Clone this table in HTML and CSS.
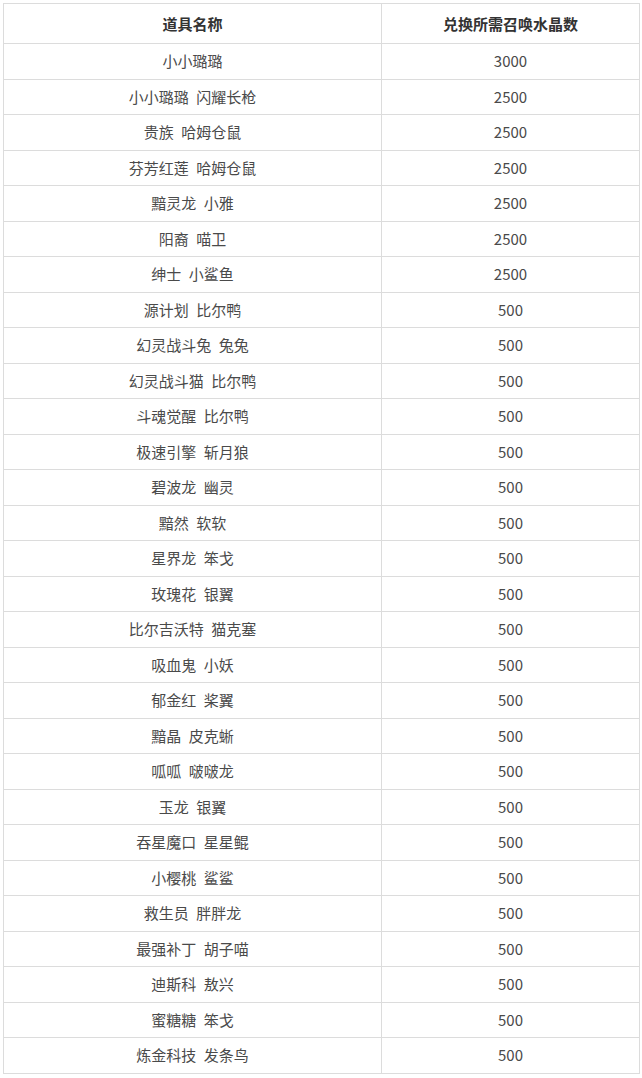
FILE: index.html
```html
<!DOCTYPE html>
<html lang="zh-CN">
<head>
<meta charset="utf-8">
<title>道具兑换</title>
<link rel="stylesheet" href="styles.css">
</head>
<body>
<table class="exchange">
  <thead>
    <tr><th class="col-name">道具名称</th><th class="col-cost">兑换所需召唤水晶数</th></tr>
  </thead>
  <tbody>
    <tr><td>小小璐璐</td><td>3000</td></tr>
    <tr><td>小小璐璐 闪耀长枪</td><td>2500</td></tr>
    <tr><td>贵族 哈姆仓鼠</td><td>2500</td></tr>
    <tr><td>芬芳红莲 哈姆仓鼠</td><td>2500</td></tr>
    <tr><td>黯灵龙 小雅</td><td>2500</td></tr>
    <tr><td>阳裔 喵卫</td><td>2500</td></tr>
    <tr><td>绅士 小鲨鱼</td><td>2500</td></tr>
    <tr><td>源计划 比尔鸭</td><td>500</td></tr>
    <tr><td>幻灵战斗兔 兔兔</td><td>500</td></tr>
    <tr><td>幻灵战斗猫 比尔鸭</td><td>500</td></tr>
    <tr><td>斗魂觉醒 比尔鸭</td><td>500</td></tr>
    <tr><td>极速引擎 斩月狼</td><td>500</td></tr>
    <tr><td>碧波龙 幽灵</td><td>500</td></tr>
    <tr><td>黯然 软软</td><td>500</td></tr>
    <tr><td>星界龙 笨戈</td><td>500</td></tr>
    <tr><td>玫瑰花 银翼</td><td>500</td></tr>
    <tr><td>比尔吉沃特 猫克塞</td><td>500</td></tr>
    <tr><td>吸血鬼 小妖</td><td>500</td></tr>
    <tr><td>郁金红 桨翼</td><td>500</td></tr>
    <tr><td>黯晶 皮克蜥</td><td>500</td></tr>
    <tr><td>呱呱 啵啵龙</td><td>500</td></tr>
    <tr><td>玉龙 银翼</td><td>500</td></tr>
    <tr><td>吞星魔口 星星鲲</td><td>500</td></tr>
    <tr><td>小樱桃 鲨鲨</td><td>500</td></tr>
    <tr><td>救生员 胖胖龙</td><td>500</td></tr>
    <tr><td>最强补丁 胡子喵</td><td>500</td></tr>
    <tr><td>迪斯科 敖兴</td><td>500</td></tr>
    <tr><td>蜜糖糖 笨戈</td><td>500</td></tr>
    <tr><td>炼金科技 发条鸟</td><td>500</td></tr>
  </tbody>
</table>
</body>
</html>
```

FILE: styles.css
```css
html, body {
  margin: 0;
  padding: 0;
  background: #ffffff;
}

body {
  padding: 3px 0 0 3px;
  font-family: "Noto Sans CJK SC", "Noto Sans", sans-serif;
  font-size: 15px;
  color: #4a4a4a;
}

.exchange {
  width: 634px;
  border-collapse: collapse;
  table-layout: fixed;
}

.exchange th,
.exchange td {
  border: 1px solid #dcdcdc;
  text-align: center;
  vertical-align: middle;
  padding: 0;
  line-height: 20px;
  white-space: pre;
  word-spacing: 4px;
}

.exchange th {
  height: 39px;
  font-weight: 700;
  color: #333333;
}

.exchange td {
  height: 34.5px;
  font-weight: 400;
}

.col-name {
  width: 377px;
}

.col-cost {
  width: 257px;
}
```
